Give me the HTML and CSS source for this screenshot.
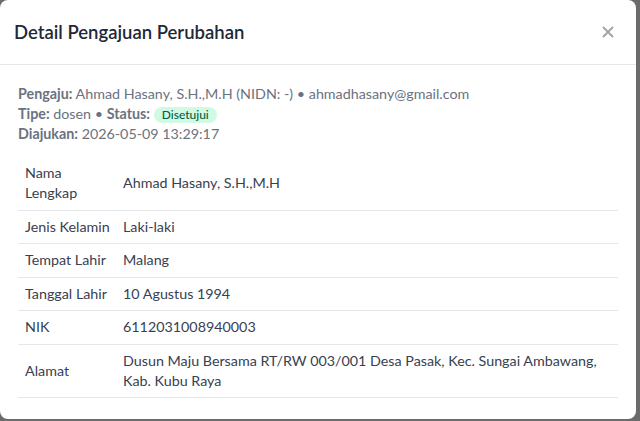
FILE: index.html
```html
<!DOCTYPE html>
<html lang="id">
<head>
<meta charset="utf-8">
<title>Detail Pengajuan Perubahan</title>
<link rel="stylesheet" href="styles.css">
</head>
<body>
<div class="modal">
  <div class="modal-header">
    <h2 class="modal-title">Detail Pengajuan Perubahan</h2>
    <button class="modal-close" type="button" aria-label="Tutup">
      <svg width="12" height="12" viewBox="0 0 12 12"><path d="M1.5 1.5 L10.5 10.5 M10.5 1.5 L1.5 10.5" stroke="currentColor" stroke-width="1.8" stroke-linecap="round"/></svg>
    </button>
  </div>
  <div class="modal-body">
    <div class="meta">
      <div><span class="meta-label">Pengaju:</span> Ahmad Hasany, S.H.,M.H (NIDN: -) • ahmadhasany@gmail.com</div>
      <div><span class="meta-label">Tipe:</span> dosen • <span class="meta-label">Status:</span> <span class="badge">Disetujui</span></div>
      <div><span class="meta-label">Diajukan:</span> 2026-05-09 13:29:17</div>
    </div>
    <table class="detail-table">
      <tbody>
        <tr><td class="key">Nama Lengkap</td><td>Ahmad Hasany, S.H.,M.H</td></tr>
        <tr><td class="key">Jenis Kelamin</td><td>Laki-laki</td></tr>
        <tr><td class="key">Tempat Lahir</td><td>Malang</td></tr>
        <tr><td class="key">Tanggal Lahir</td><td>10 Agustus 1994</td></tr>
        <tr><td class="key">NIK</td><td>6112031008940003</td></tr>
        <tr><td class="key">Alamat</td><td>Dusun Maju Bersama RT/RW 003/001 Desa Pasak, Kec. Sungai Ambawang, Kab. Kubu Raya</td></tr>
      </tbody>
    </table>
  </div>
</div>
</body>
</html>
```
FILE: styles.css
```css
* { box-sizing: border-box; }

html, body {
  margin: 0;
  height: 100%;
}

body {
  background: #6b6b6b;
  font-family: Lato, "Noto Sans", sans-serif;
  color: #374151;
  overflow: hidden;
}

.modal {
  width: 636px;
  height: 419px;
  background: #ffffff;
  border-radius: 8px;
  overflow: hidden;
}

.modal-header {
  height: 65px;
  display: flex;
  align-items: center;
  justify-content: space-between;
  padding: 0 22px 0 14px;
  border-bottom: 1px solid #e5e7eb;
}

.modal-title {
  margin: 0;
  font-size: 18.5px;
  font-weight: 600;
  color: #1f2937;
}

.modal-close {
  border: 0;
  background: none;
  padding: 0;
  color: #9ca3af;
  display: flex;
  cursor: pointer;
}

.modal-body {
  padding: 19px 18px 20px 18px;
}

.meta {
  font-size: 14.3px;
  line-height: 20px;
  color: #6b7280;
  margin-bottom: 13px;
}

.meta-label {
  font-weight: 700;
  color: #6b7280;
}

.badge {
  display: inline-block;
  background: #d1fae5;
  color: #065f46;
  font-size: 12px;
  line-height: 16px;
  padding: 0 8px;
  border-radius: 9999px;
  font-weight: 500;
}

.detail-table {
  width: 600px;
  border-collapse: collapse;
  font-size: 14.3px;
  line-height: 20px;
  color: #374151;
}

.detail-table td {
  padding: 6px 6px 6.5px 6px;
  border-bottom: 1px solid #e5e7eb;
  vertical-align: middle;
}

.detail-table td.key {
  width: 99px;
  padding-left: 7px;
}
```
